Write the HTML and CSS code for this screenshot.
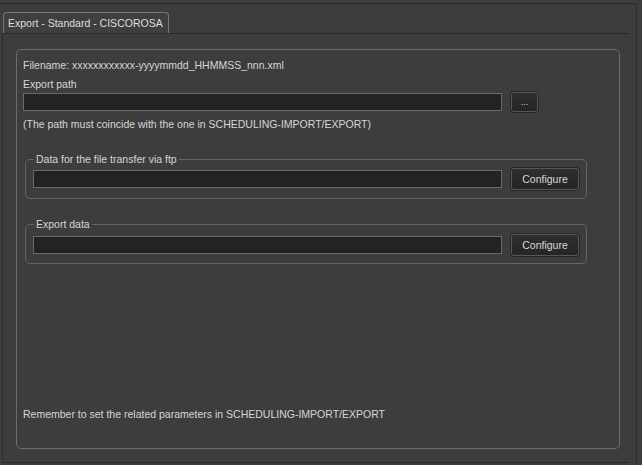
FILE: index.html
```html
<!DOCTYPE html>
<html lang="en">
<head>
    <meta charset="UTF-8">
    <title>Export - Standard - CISCOROSA</title>
    <link rel="stylesheet" href="styles.css">
</head>
<body>
    <div class="window">
        <div class="tabs">
            <div class="tab">Export - Standard - CISCOROSA</div>
        </div>

        <div class="pane">
            <div class="group">
                <div class="line">Filename: xxxxxxxxxxxx-yyyymmdd_HHMMSS_nnn.xml</div>
                <div class="line label">Export path</div>
                <div class="row path-row">
                    <input type="text" class="field path-field">
                    <button class="button dots">...</button>
                </div>
                <div class="line note">(The path must coincide with the one in SCHEDULING-IMPORT/EXPORT)</div>

                <fieldset class="box box-ftp">
                    <legend>Data for the file transfer via ftp</legend>
                    <div class="row">
                        <input type="text" class="field">
                        <button class="button">Configure</button>
                    </div>
                </fieldset>

                <fieldset class="box box-export">
                    <legend>Export data</legend>
                    <div class="row">
                        <input type="text" class="field">
                        <button class="button">Configure</button>
                    </div>
                </fieldset>

                <div class="line remember">Remember to set the related parameters in SCHEDULING-IMPORT/EXPORT</div>
            </div>
        </div>
    </div>
</body>
</html>
```

FILE: styles.css
```css
* {
    margin: 0;
    padding: 0;
    box-sizing: border-box;
}

body {
    font-family: 'Liberation Sans', Arial, sans-serif;
    font-size: 10.5px;
    background: #3d3d3d;
    color: #d6d6d6;
    width: 642px;
    height: 465px;
    overflow: hidden;
}

.window {
    margin: 3px 5px 0 0;
    height: 462px;
    border-top: 1px solid #2a2a2a;
    border-right: 1px solid #2a2a2a;
    display: flex;
    flex-direction: column;
}

.tabs {
    padding: 8px 0 0 3px;
    display: flex;
}

.tab {
    height: 21px;
    line-height: 20px;
    padding: 0 5px 0 4px;
    border: 1px solid #777;
    border-bottom: none;
    border-radius: 4px 4px 0 0;
    background: #3f3f3f;
    color: #dedede;
    white-space: nowrap;
}

.pane {
    width: 628px;
    margin-left: 2px;
    height: 430px;
    border-top: 1px solid #2a2a2a;
    border-left: 1px solid #2e2e2e;
    border-bottom: 1px solid #2a2a2a;
    padding: 15px 10px 13px 13px;
}

.group {
    height: 400px;
    border: 1px solid #6c6c6c;
    border-radius: 5px;
    padding: 8px 7px 27px 6px;
    display: flex;
    flex-direction: column;
}

.line {
    line-height: 14px;
    height: 14px;
    white-space: nowrap;
}

.label {
    margin-top: 5px;
}

.row {
    display: flex;
    align-items: center;
    gap: 9px;
}

.path-row {
    margin-top: 1px;
    height: 20px;
}

.field {
    height: 18px;
    background: #232323;
    border: 1px solid #6a6a6a;
    outline: none;
    color: #dadada;
}

.path-field {
    width: 479px;
}

.box .field {
    width: 469px;
}

.button {
    height: 22px;
    width: 68px;
    background: linear-gradient(#2e2e2e, #252525);
    border: 1px solid #575757;
    border-radius: 3px;
    box-shadow: 0 0 0 1px #262626;
    color: #d8d8d8;
    font-family: inherit;
    font-size: 10.5px;
}

.dots {
    width: 27px;
    height: 20px;
    font-size: 9px;
}

.note {
    margin-top: 5px;
}

.box {
    border: 1px solid #666;
    border-radius: 5px;
    margin-left: 2px;
    width: 562px;
    padding: 2px 7px 8px 7px;
}

.box legend {
    margin-left: 1px;
    padding: 0 2px;
    line-height: 14px;
}

.box-ftp {
    margin-top: 21px;
}

.box-export {
    margin-top: 18px;
    padding-top: 3px;
    padding-bottom: 7px;
}

.remember {
    margin-top: auto;
}
```
